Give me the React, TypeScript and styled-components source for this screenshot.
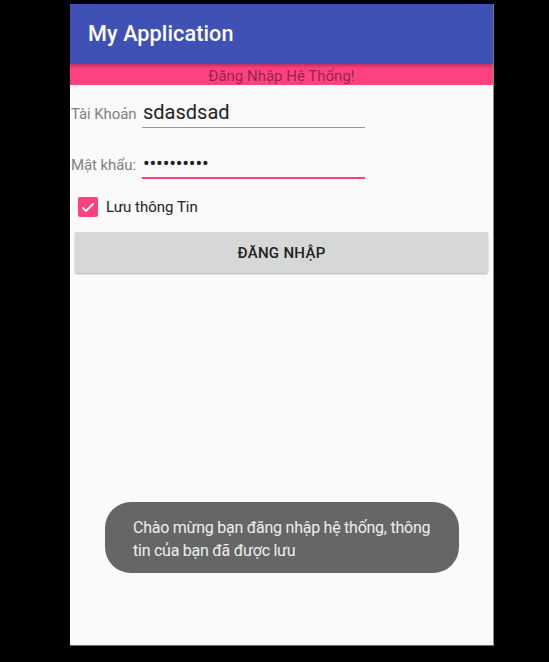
import React from "react";
import styled, { createGlobalStyle } from "styled-components";

const Global = createGlobalStyle`
  html, body { margin: 0; padding: 0; background: #000; }
  body { font-family: Roboto, "Noto Sans", sans-serif; }
  * { box-sizing: border-box; }
`;

const Page = styled.div`
  width: 549px;
  height: 662px;
  background: #000;
  padding: 4px 0 0 70px;
`;

const Screen = styled.div`
  position: relative;
  width: 424px;
  height: 642px;
  background: #fafafa;
  border-right: 1px solid #8a8a8a;
  border-bottom: 1px solid #6a6a6a;
  display: flex;
  flex-direction: column;
`;

const AppBar = styled.div`
  position: relative;
  z-index: 1;
  height: 60px;
  background: #3f51b5;
  display: flex;
  align-items: center;
  padding: 0 0 2px 18px;
  box-shadow: 0 2px 3px rgba(0, 0, 0, 0.28);
`;

const Title = styled.h1`
  margin: 0;
  color: #fff;
  font-size: 21.6px;
  font-weight: 500;
  letter-spacing: 0.1px;
`;

const Banner = styled.div`
  height: 21px;
  background: #ff4081;
  color: rgba(0, 0, 0, 0.45);
  font-size: 15px;
  line-height: 21px;
  text-align: center;
  padding-top: 2px;
`;

const Form = styled.div`
  display: flex;
  flex-direction: column;
  padding: 8px 0 0 1px;
`;

const Row = styled.div<{ $gap?: number }>`
  display: flex;
  align-items: baseline;
  margin-top: ${(p) => p.$gap ?? 0}px;
`;

const Label = styled.span`
  width: 71px;
  color: #808080;
  font-size: 15px;
  letter-spacing: -0.1px;
`;

const Field = styled.div<{ $focused?: boolean }>`
  width: 223px;
  padding: 7px 0 ${(p) => (p.$focused ? 2 : 3)}px 1px;
  line-height: 24px;
  font-size: 20px;
  color: #222;
  border-bottom: ${(p) => (p.$focused ? "2px solid #ff4081" : "1px solid #999")};
`;

const Dots = styled.span`
  letter-spacing: -0.2px;
`;

const CheckRow = styled.label`
  display: flex;
  align-items: center;
  gap: 8px;
  margin: 18px 0 0 7px;
  font-size: 15px;
  color: #222;
`;

const Box = styled.span`
  width: 20px;
  height: 20px;
  border-radius: 2px;
  background: #ff4081;
  display: flex;
  align-items: center;
  justify-content: center;
`;

const Button = styled.button`
  margin: 15px 5px 0 4px;
  height: 41px;
  border: none;
  border-radius: 2px;
  background: #d6d7d7;
  box-shadow: 0 1px 2px rgba(0, 0, 0, 0.3);
  font-family: Roboto, sans-serif;
  font-size: 15px;
  font-weight: 500;
  color: #222;
  letter-spacing: 0.3px;
`;

const Toast = styled.div`
  position: absolute;
  left: 35px;
  top: 498px;
  width: 354px;
  height: 71px;
  border-radius: 26px;
  background: #666;
  color: #eeeeee;
  font-size: 16px;
  letter-spacing: -0.25px;
  line-height: 23px;
  padding: 14px 20px 0 28px;
`;

const Line = styled.span`
  display: block;
  white-space: nowrap;
`;

export default function App() {
  return (
    <Page>
      <Global />
      <Screen>
        <AppBar>
          <Title>My Application</Title>
        </AppBar>
        <Banner>Đăng Nhập Hệ Thống!</Banner>
        <Form>
          <Row>
            <Label>Tài Khoản</Label>
            <Field>sdasdsad</Field>
          </Row>
          <Row $gap={16}>
            <Label>Mật khẩu:</Label>
            <Field $focused>
              <Dots>••••••••••</Dots>
            </Field>
          </Row>
          <CheckRow>
            <Box>
              <svg width="14" height="11" viewBox="0 0 14 11">
                <path d="M1.5 5.5 L5 9 L12.5 1.5" fill="none" stroke="#fff" strokeWidth="1.8" />
              </svg>
            </Box>
            Lưu thông Tin
          </CheckRow>
          <Button>ĐĂNG NHẬP</Button>
        </Form>
        <Toast>
          <Line>Chào mừng bạn đăng nhập hệ thống, thông</Line>
          <Line>tin của bạn đã được lưu</Line>
        </Toast>
      </Screen>
    </Page>
  );
}
